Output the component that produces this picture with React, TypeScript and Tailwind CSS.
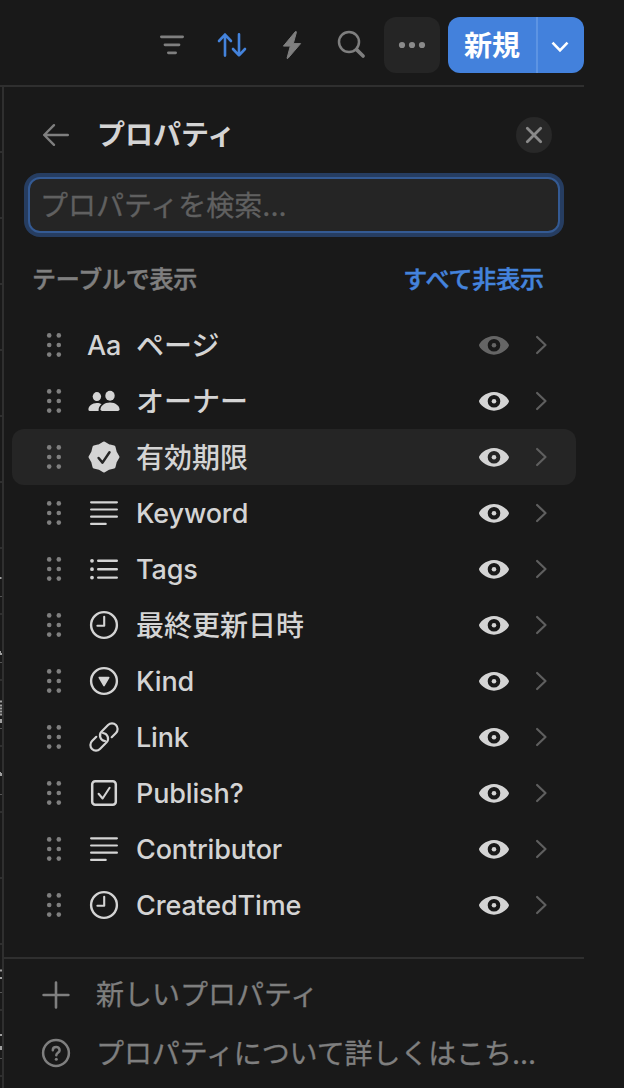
import type { ReactNode } from 'react';

type IconProps = { className?: string };

/* Toolbar icons */

function FilterIcon() {
  return (
    <svg className="w-8 h-8" viewBox="0 0 32 32" fill="none" stroke="#7f7f7f" strokeWidth="2.8" strokeLinecap="round">
      <path d="M5.4 7.8h21.2M9 15.8h14M12.4 23.8h7.2" />
    </svg>
  );
}

function SortIcon() {
  return (
    <svg className="w-8 h-8" viewBox="0 0 32 32" fill="none" stroke="#4483dc" strokeWidth="2.6" strokeLinecap="round" strokeLinejoin="round">
      <path d="M9 26.6V5.6M3 12l6-6.4 6 6.4M23 5.2v21M17 20l6 6.4 6-6.4" />
    </svg>
  );
}

function BoltIcon() {
  return (
    <svg className="w-8 h-8" viewBox="0 0 32 32" fill="#7f7f7f" stroke="#7f7f7f" strokeWidth="1" strokeLinejoin="round">
      <path d="M19.4 2.6L7.4 17.1h6.9l-3.2 11.8q-.1 1.2.9.4L24.6 14.6h-7.3l3.1-11.3q.1-1.2-1-.7z" />
    </svg>
  );
}

function SearchIcon() {
  return (
    <svg className="w-8 h-8" viewBox="0 0 32 32" fill="none" stroke="#7f7f7f" strokeLinecap="round">
      <circle cx="13" cy="13" r="10" strokeWidth="2.5" />
      <path d="M20.6 20.6l6.5 6.4" strokeWidth="3.6" />
    </svg>
  );
}

function MoreIcon() {
  return (
    <svg className="w-8 h-8" viewBox="0 0 32 32" fill="#8a8a8a">
      <circle cx="6" cy="16" r="3.1" />
      <circle cx="16" cy="16" r="3.1" />
      <circle cx="26" cy="16" r="3.1" />
    </svg>
  );
}

/* Row icons */

function DragHandle() {
  return (
    <svg className="w-5 h-7 shrink-0" viewBox="0 0 20 28" fill="#7f7f7f">
      <circle cx="5.2" cy="4.4" r="2.3" />
      <circle cx="14.8" cy="4.4" r="2.3" />
      <circle cx="5.2" cy="14" r="2.3" />
      <circle cx="14.8" cy="14" r="2.3" />
      <circle cx="5.2" cy="23.6" r="2.3" />
      <circle cx="14.8" cy="23.6" r="2.3" />
    </svg>
  );
}

function PeopleIcon() {
  return (
    <svg className="w-8 h-8" viewBox="0 0 32 32" fill="currentColor">
      <ellipse cx="8.9" cy="11.6" rx="4.2" ry="4.5" />
      <ellipse cx="22" cy="10.8" rx="4.7" ry="5" />
      <path d="M10.6 26H2q-1.600 0-1.600-1.600c0-3.300 3.600-6.400 8.500-6.400 1.900 0 3.400.4 4.700 1.100-2 1.700-3.300 4-3 6.900z" />
      <path d="M14.200 26q-1.700 0-1.700-1.700c0-3.300 3.900-6.800 9.500-6.800s9.500 3.500 9.500 6.800q0 1.700-1.700 1.700z" />
    </svg>
  );
}

function BadgeIcon() {
  return (
    <svg className="w-8 h-8" viewBox="0 0 32 32" fill="none">
      <path
        d="M16 2.200L20.600 4.900L25.800 6.200L27.100 11.400L29.800 16L27.100 20.600L25.800 25.800L20.600 27.100L16 29.800L11.400 27.100L6.200 25.800L4.900 20.600L2.200 16L4.900 11.400L6.200 6.200L11.400 4.900Z"
        fill="currentColor"
        stroke="currentColor"
        strokeWidth="3.400"
        strokeLinejoin="round"
      />
      <path d="M10.600 17l3.900 4.600 7-10.400" stroke="#252525" strokeWidth="2.500" strokeLinecap="round" strokeLinejoin="round" />
    </svg>
  );
}

function TextIcon() {
  return (
    <svg className="w-8 h-8" viewBox="0 0 32 32" fill="none" stroke="currentColor" strokeWidth="2.200" strokeLinecap="round">
      <path d="M3.100 5.300h25.800M3.100 12.500h25.800M3.100 19.700h25.800M3.100 26.900h14.600" />
    </svg>
  );
}

function ListIcon() {
  return (
    <svg className="w-8 h-8" viewBox="0 0 32 32" fill="none" stroke="currentColor" strokeWidth="2.400" strokeLinecap="round">
      <path d="M10.200 7.800h18.600M10.200 16.200h18.600M10.200 24.600h18.600" />
      <path d="M4 7.800h.01M4 16.200h.01M4 24.600h.01" strokeWidth="3.800" />
    </svg>
  );
}

function ClockIcon() {
  return (
    <svg className="w-8 h-8" viewBox="0 0 32 32" fill="none" stroke="currentColor" strokeWidth="2.400" strokeLinecap="round" strokeLinejoin="round">
      <circle cx="16" cy="16" r="12.900" />
      <path d="M16.200 7.800v9H9.400" strokeWidth="2.100" />
    </svg>
  );
}

function SelectIcon() {
  return (
    <svg className="w-8 h-8" viewBox="0 0 32 32">
      <circle cx="16" cy="16" r="12.900" fill="none" stroke="currentColor" strokeWidth="2.400" />
      <path d="M11.300 12.500h9.400L16 20.600z" fill="currentColor" stroke="currentColor" strokeWidth="1.600" strokeLinejoin="round" />
    </svg>
  );
}

function LinkIcon() {
  return (
    <svg className="w-8 h-8" viewBox="0 0 32 32" fill="none" stroke="currentColor" strokeWidth="2.200" strokeLinecap="round">
      <path d="M23.700 16.200L27.960 11.960A5.600 5.600 0 0 0 20.040 4.040L13.640 10.440A5.600 5.600 0 0 0 17 20" />
      <path d="M8.300 15.800L4.040 20.040A5.600 5.600 0 0 0 11.960 27.960L18.360 21.560A5.600 5.600 0 0 0 15 12" />
    </svg>
  );
}

function CheckboxIcon() {
  return (
    <svg className="w-8 h-8" viewBox="0 0 32 32" fill="none" stroke="currentColor" strokeLinecap="round" strokeLinejoin="round">
      <rect x="4.200" y="4.200" width="23.600" height="23.600" rx="3" strokeWidth="2.500" />
      <path d="M10.600 16.800l4 4.700 7-10.700" strokeWidth="2.100" />
    </svg>
  );
}

function EyeIcon({ className = '' }: IconProps) {
  return (
    <svg className={`w-8 h-8 ${className}`} viewBox="0 0 32 32" fill="currentColor" fillRule="evenodd">
      <path d="M16 6.900c8.400 0 15 7 15 9.400s-6.600 9.400-15 9.400-15-7-15-9.400 6.600-9.400 15-9.400zm0 3.100a6.300 6.300 0 1 0 0 12.600 6.300 6.300 0 0 0 0-12.600z" />
      <circle cx="16" cy="16.300" r="2.300" />
    </svg>
  );
}

function ChevronRight() {
  return (
    <svg className="w-4 h-6" viewBox="0 0 16 24" fill="none" stroke="#5f5f5f" strokeWidth="2.200" strokeLinecap="round" strokeLinejoin="round">
      <path d="M3.100 4l8.400 8-8.400 8" />
    </svg>
  );
}

type Property = {
  name: string;
  icon: ReactNode;
  latin?: boolean;
  locked?: boolean;
  active?: boolean;
};

const properties: Property[] = [
  { name: 'ページ', icon: <span className="pt-0.5 text-[27px] leading-8 tracking-[-0.3px]">Aa</span>, locked: true },
  { name: 'オーナー', icon: <PeopleIcon /> },
  { name: '有効期限', icon: <BadgeIcon />, active: true },
  { name: 'Keyword', icon: <TextIcon />, latin: true },
  { name: 'Tags', icon: <ListIcon />, latin: true },
  { name: '最終更新日時', icon: <ClockIcon /> },
  { name: 'Kind', icon: <SelectIcon />, latin: true },
  { name: 'Link', icon: <LinkIcon />, latin: true },
  { name: 'Publish?', icon: <CheckboxIcon />, latin: true },
  { name: 'Contributor', icon: <TextIcon />, latin: true },
  { name: 'CreatedTime', icon: <ClockIcon />, latin: true },
];

// Edge of the table behind the panel: one path of clipped cell content per row
const tableRows = [
  '', '', '', '', '', '', '',
  'M0 29h1.500',
  'M0 36v3M1 38v2',
  'M0 20.500h2M0 24.500h2M0 27.500h2M0 30.500h2M0 33.500h2M1 38v4',
  'M0 25v2M1 26v3',
  '', '',
  'M0 25.500h2M0 33h2',
  'M0 24h2M1 35v4',
];

function Toolbar() {
  return (
    <div className="flex h-[87px] w-[584px] items-start justify-end gap-2 border-b-2 border-[#2f2f2f] pt-[17px]">
      <div className="mr-2 flex h-14 items-center gap-7">
        <button><FilterIcon /></button>
        <button><SortIcon /></button>
        <button><BoltIcon /></button>
        <button><SearchIcon /></button>
      </div>
      <button className="flex h-14 w-14 items-center justify-center rounded-xl bg-[#252525]">
        <MoreIcon />
      </button>
      <div className="flex h-14 w-[136px] overflow-hidden rounded-xl bg-[#4381dc] text-white">
        <button className="w-[90px] border-r-2 border-[#5d94e3] pt-0.5 text-[28px] leading-10 font-bold">新規</button>
        <button className="flex flex-1 items-center justify-center pr-0.5">
          <svg className="w-5 h-5" viewBox="0 0 20 20" fill="none" stroke="currentColor" strokeWidth="2.600">
            <path d="M2.500 7.600l7.500 7.800 7.500-7.800" />
          </svg>
        </button>
      </div>
    </div>
  );
}

function PropertyRow({ name, icon, latin, locked, active }: Property) {
  return (
    <li className={`flex h-14 items-center rounded-xl pl-8 pr-[26px] ${active ? 'bg-[#252525]' : ''}`}>
      <DragHandle />
      <span className="ml-6 flex w-8 shrink-0 justify-center">{icon}</span>
      <span className={`ml-4 flex-1 pt-0.5 leading-10 ${latin ? 'text-[27px] tracking-[-0.15px]' : 'text-[28px]'}`}>
        {name}
      </span>
      <EyeIcon className={locked ? 'text-[#656565]' : ''} />
      <span className="ml-6"><ChevronRight /></span>
    </li>
  );
}

export default function App() {
  return (
    <div className="h-[1088px] w-[624px] overflow-hidden bg-[#191919] font-['Inter','Noto_Sans_CJK_JP',sans-serif] font-medium text-[#d4d4d4]">
      <Toolbar />
      <div className="flex h-[1001px]">
        <div className="w-0.5 shrink-0">
          {tableRows.map((d, i) => (
            <div key={i} className="h-[66px] border-b-2 border-[#2f2f2f]">
              {d && (
                <svg className="block h-16 w-0.5" viewBox="0 0 2 64" fill="none">
                  <path d={d} stroke="#a0a0a0" strokeWidth="2" />
                  <path d="M0 47.500h2" stroke="#555555" />
                </svg>
              )}
            </div>
          ))}
        </div>

        <div className="flex w-[582px] flex-col border-l-2 border-[#2f2f2f]">
          {/* Panel header */}
          <div className="flex h-[90px] items-center pl-9 pr-8 pt-1.5">
            <svg className="w-8 h-8" viewBox="0 0 32 32" fill="none" stroke="#7f7f7f" strokeWidth="2.400" strokeLinecap="round" strokeLinejoin="round">
              <path d="M27.800 16H4.200M14 6.200L4.200 16l9.800 9.800" />
            </svg>
            <h1 className="ml-[25px] flex-1 text-[28px] leading-10 font-bold">プロパティ</h1>
            <button className="flex h-9 w-9 items-center justify-center rounded-full bg-[#282828]">
              <svg className="w-5 h-5" viewBox="0 0 20 20" stroke="#8a8a8a" strokeWidth="2.800" strokeLinecap="round">
                <path d="M3.300 3.300l13.400 13.400M16.700 3.300L3.300 16.700" />
              </svg>
            </button>
          </div>

          <input
            type="text"
            placeholder="プロパティを検索..."
            className="ml-6 h-14 w-[532px] shrink-0 rounded-xl border-2 border-[#345a93] bg-[#252525] px-2.5 pt-0.5 text-[28px] font-normal ring-4 ring-[#263d61] outline-none placeholder:text-[#606060] [-webkit-text-stroke:0.3px]"
          />

          <div className="mt-[26px] flex h-10 items-center justify-between pl-7 pr-10 pt-0.5 text-2xl [-webkit-text-stroke:0.5px]">
            <h2 className="tracking-[-0.2px] text-[#7f7f7f]">テーブルで表示</h2>
            <button className="tracking-[-0.1px] text-[#4483dc]">すべて非表示</button>
          </div>

          <ul className="mx-2 mt-[18px] flex flex-col">
            {properties.map((property) => (
              <PropertyRow key={property.name} {...property} />
            ))}
          </ul>

          {/* Footer actions */}
          <div className="mt-6 flex flex-col gap-0.5 border-t-2 border-[#2f2f2f] pt-2 text-[28px] leading-10 font-normal text-[#7f7f7f] [-webkit-text-stroke:0.3px]">
            <button className="flex h-14 items-center gap-6 pl-9">
              <svg className="w-8 h-8" viewBox="0 0 32 32" stroke="currentColor" strokeWidth="2.600" strokeLinecap="round">
                <path d="M3.600 16h24.800M16 3.600v24.800" />
              </svg>
              <span>新しいプロパティ</span>
            </button>
            <button className="flex h-14 items-center gap-6 pl-9">
              <svg className="w-8 h-8" viewBox="0 0 32 32" fill="none" stroke="currentColor" strokeWidth="2.500" strokeLinecap="round">
                <circle cx="16" cy="16" r="12.900" />
                <path d="M12.800 13.200c0-4.300 6.800-4.300 6.800 0 0 2.600-3.300 2.600-3.300 5" />
                <path d="M16.300 22.300h.01" strokeWidth="3" />
              </svg>
              <span className="pt-0.5 tracking-[-0.1px]">プロパティについて詳しくはこち...</span>
            </button>
          </div>
        </div>
      </div>
    </div>
  );
}
